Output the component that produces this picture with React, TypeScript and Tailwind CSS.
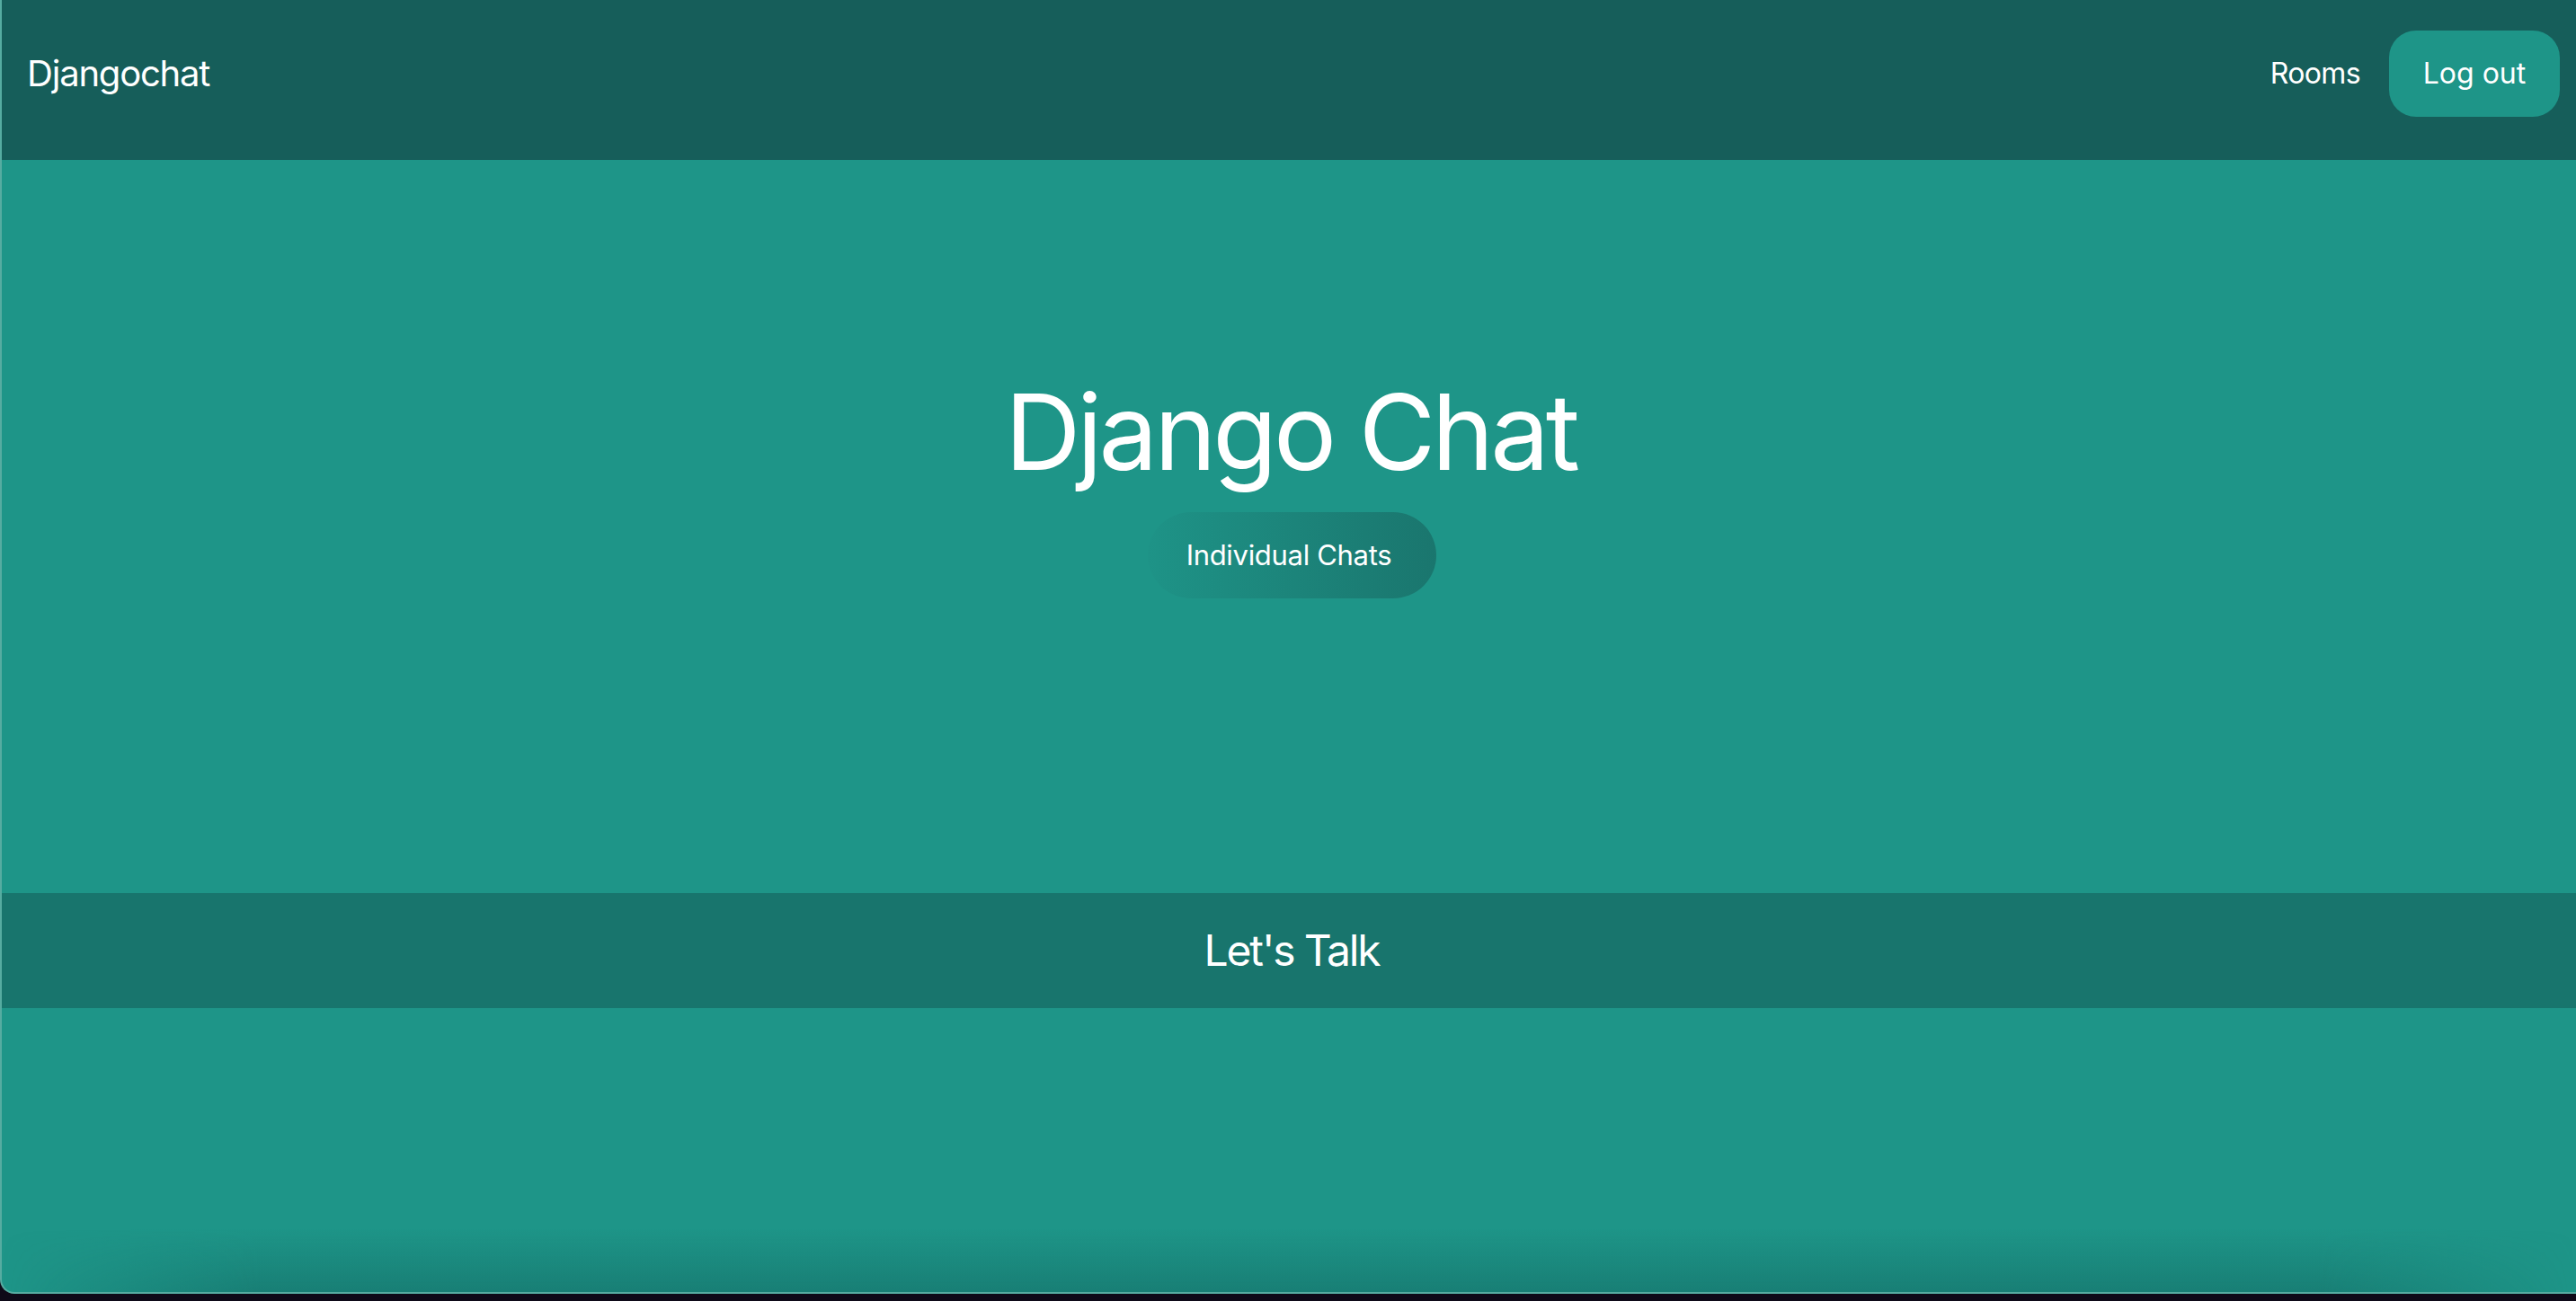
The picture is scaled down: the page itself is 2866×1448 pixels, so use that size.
import React from 'react';

const App: React.FC = () => {
  return (
    <div className="h-screen w-full bg-[#0e0a18] font-['Inter','Noto_Sans',sans-serif] text-white">
      <div className="flex h-[1440px] flex-col overflow-hidden rounded-bl-[16px] border-b-2 border-l-2 border-[#56aca1] bg-[#1e9588]">
        {/* nav */}
        <nav className="flex h-[178px] shrink-0 items-center justify-between bg-[#165e5a] pb-[14px] pl-[28px] pr-[18px]">
          <a href="#" className="text-[40px] tracking-[-0.03em]">Djangochat</a>
          <div className="flex items-center gap-[32px]">
            <a href="#" className="text-[32px] tracking-[-0.02em]">Rooms</a>
            <a href="#" className="flex h-[96px] w-[190px] items-center justify-center rounded-[30px] bg-[#1e9588] text-[32px]">
              Log out
            </a>
          </div>
        </nav>

        {/* hero */}
        <section className="flex flex-1 flex-col items-center pt-[244px]">
          <h1 className="pl-[4px] text-[117px] leading-none tracking-[-0.035em]">Django Chat</h1>
          <a
            href="#"
            className="ml-[6px] mt-[31px] flex h-[96px] w-[321px] items-center justify-center rounded-full bg-gradient-to-r from-[#1e9387] to-[#1a766e] pr-[6px]"
          >
            <span className="whitespace-nowrap text-[31px] tracking-[-0.01em]">Individual Chats</span>
          </a>
        </section>

        {/* band */}
        <div className="flex h-[128px] shrink-0 items-center justify-center bg-[#18756d] pl-[6px]">
          <h2 className="text-[48px] tracking-[-0.045em]">Let's Talk</h2>
        </div>

        {/* lower area */}
        <section className="flex h-[316px] shrink-0 flex-col justify-end">
          <div className="h-[70px] bg-[linear-gradient(to_bottom,transparent,rgba(18,100,94,0.45))] [mask-image:linear-gradient(to_right,transparent,black_10%,black_90%,transparent)]" />
        </section>
      </div>
    </div>
  );
};

export default App;
